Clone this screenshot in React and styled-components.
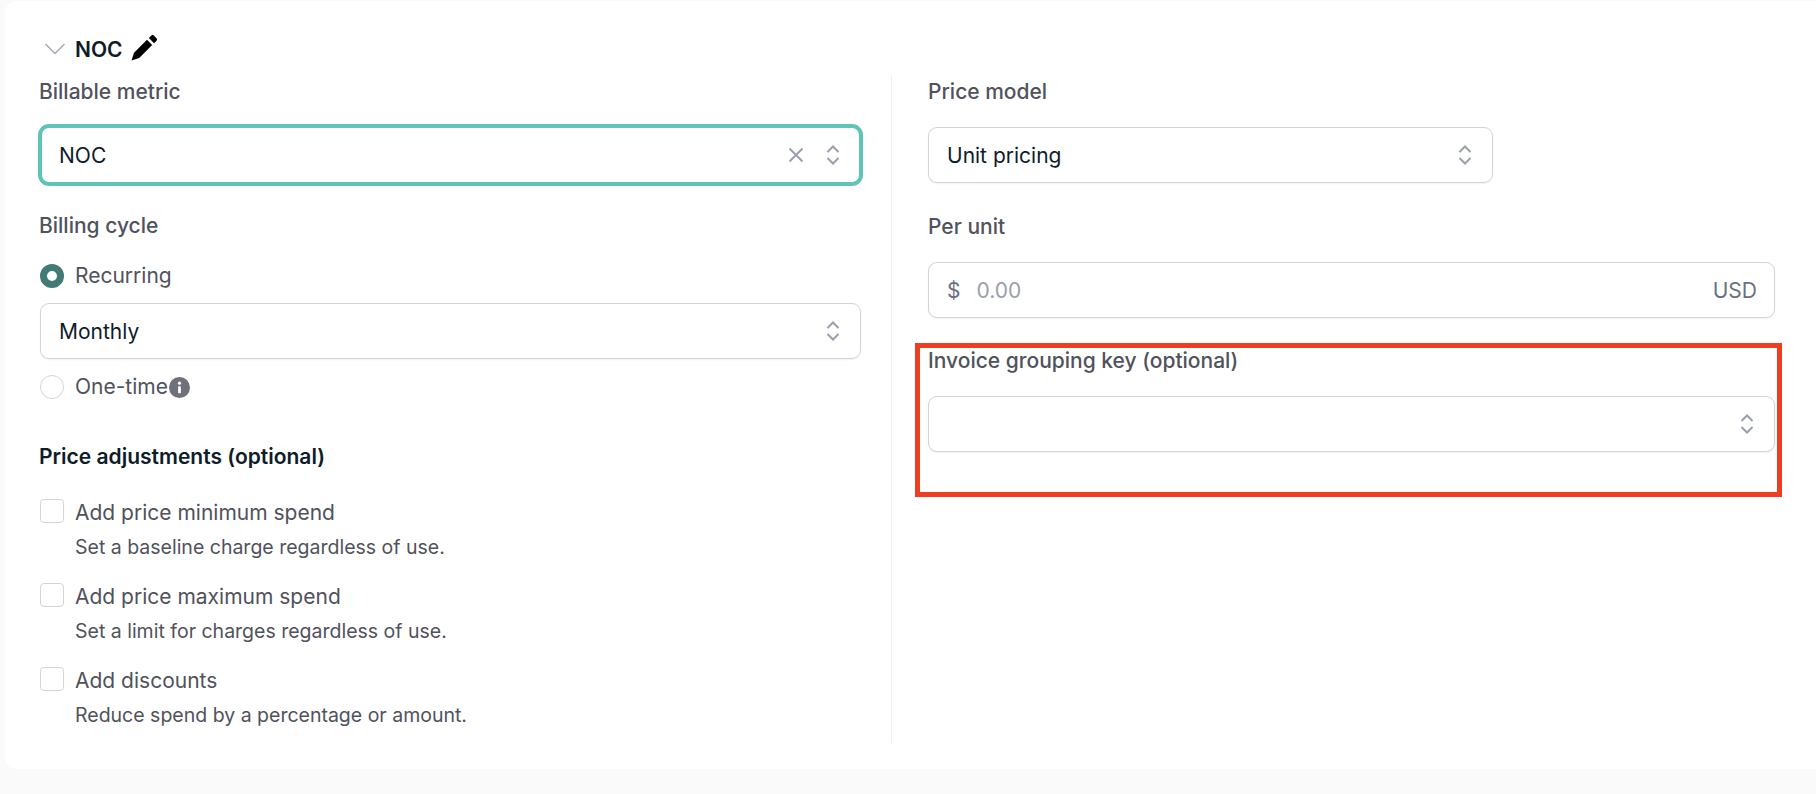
import styled, { createGlobalStyle } from 'styled-components';

const GlobalStyle = createGlobalStyle`
    * {
        box-sizing: border-box;
    }

    body {
        margin: 0;
        background: #fafafa;
        font-family: 'Inter', 'Liberation Sans', sans-serif;
    }
`;

function UpDownIcon() {
    return (
        <svg width="14" height="22" viewBox="0 0 14 22" fill="none" stroke="#9a9fae" strokeWidth="2">
            <path d="M1.5 8 L7 2.5 L12.5 8" />
            <path d="M1.5 14 L7 19.5 L12.5 14" />
        </svg>
    );
}

function CloseIcon() {
    return (
        <svg width="16" height="16" viewBox="0 0 16 16" fill="none" stroke="#9a9fae" strokeWidth="2">
            <path d="M1.5 1.5 L14.5 14.5 M14.5 1.5 L1.5 14.5" />
        </svg>
    );
}

function CollapseIcon() {
    return (
        <svg width="20" height="12" viewBox="0 0 20 12" fill="none" stroke="#a4a8b5" strokeWidth="1.4">
            <path d="M0.5 1 L10 10.5 L19.5 1" />
        </svg>
    );
}

function PencilIcon() {
    return (
        <svg width="27" height="27" viewBox="0 0 26 26" fill="#000">
            <path d="M0.5 25.5 L2.9 18.1 L15.4 5.6 L20.4 10.6 L7.9 23.1 Z" />
            <path d="M17.2 3.8 L19.6 1.4 Q20.8 0.2 22 1.4 L24.6 4 Q25.8 5.2 24.6 6.4 L22.2 8.8 Z" />
        </svg>
    );
}

function InfoIcon() {
    return (
        <svg width="21" height="21" viewBox="0 0 21 21">
            <circle cx="10.5" cy="10.5" r="10.5" fill="#6f7079" />
            <circle cx="10.5" cy="6.2" r="1.6" fill="#fff" />
            <rect x="9.1" y="9.2" width="2.8" height="7" rx="0.6" fill="#fff" />
        </svg>
    );
}

function Adjustment({ title, description }) {
    return (
        <AdjustmentRow>
            <Checkbox />
            <div>
                <OptionLabel>{title}</OptionLabel>
                <Description>{description}</Description>
            </div>
        </AdjustmentRow>
    );
}

export default function App() {
    return (
        <Page>
            <GlobalStyle />
            <Card>
                <Header>
                    <CollapseIcon />
                    <Title>NOC</Title>
                    <PencilIcon />
                </Header>

                <Columns>
                    <LeftColumn>
                        <Label>Billable metric</Label>
                        <Select $focused>
                            <Value>NOC</Value>
                            <CloseIcon />
                            <UpDownIcon />
                        </Select>

                        <SectionLabel>Billing cycle</SectionLabel>
                        <RadioRow>
                            <Radio $checked />
                            <OptionLabel>Recurring</OptionLabel>
                        </RadioRow>
                        <Select>
                            <Value>Monthly</Value>
                            <UpDownIcon />
                        </Select>
                        <RadioRow $last>
                            <Radio />
                            <OptionLabel>One-time</OptionLabel>
                            <InfoIcon />
                        </RadioRow>

                        <Heading>Price adjustments (optional)</Heading>
                        <Adjustment title="Add price minimum spend" description="Set a baseline charge regardless of use." />
                        <Adjustment title="Add price maximum spend" description="Set a limit for charges regardless of use." />
                        <Adjustment title="Add discounts" description="Reduce spend by a percentage or amount." />
                    </LeftColumn>

                    <RightColumn>
                        <Label>Price model</Label>
                        <Select $narrow>
                            <Value>Unit pricing</Value>
                            <UpDownIcon />
                        </Select>

                        <RightLabel>Per unit</RightLabel>
                        <AmountInput>
                            <Affix>$</Affix>
                            <Placeholder>0.00</Placeholder>
                            <Affix>USD</Affix>
                        </AmountInput>

                        <GroupingField>
                            <Highlight />
                            <Label>Invoice grouping key (optional)</Label>
                            <Select>
                                <Value />
                                <UpDownIcon />
                            </Select>
                        </GroupingField>
                    </RightColumn>
                </Columns>
            </Card>
        </Page>
    );
}

const Page = styled.div`
    height: 794px;
    padding: 1px 0 0 5px;
    overflow: hidden;
`;

const Card = styled.div`
    height: 768px;
    padding: 25px 41px 0 35px;
    background: #fff;
    border-radius: 12px 0 0 12px;
`;

const Header = styled.div`
    height: 49px;
    padding: 0 0 2px 5px;
    display: flex;
    align-items: center;
    gap: 10px;

    svg:first-child {
        margin-top: -1px;
    }

    svg:last-child {
        margin: -4px 0 0 -2px;
    }
`;

const Title = styled.h2`
    margin: 0;
    font-size: 21px;
    font-weight: 600;
    color: #0e1c2a;
`;

const Columns = styled.div`
    height: 668px;
    display: grid;
    grid-template-columns: 852px 1fr;
`;

const Label = styled.div`
    height: 28px;
    margin-bottom: 21px;
    font-size: 21px;
    font-weight: 500;
    line-height: 28px;
    color: #50525c;
`;

const SectionLabel = styled(Label)`
    margin: 28px 0 22px;
`;

const RightLabel = styled(Label)`
    margin-top: 30px;
`;

const Heading = styled.h3`
    height: 28px;
    margin: 42px 0 28px;
    font-size: 21px;
    font-weight: 600;
    line-height: 28px;
    color: #0e1c2a;
`;

const LeftColumn = styled.div`
    padding: 3px 30px 0 0;
    border-right: 1px solid #f0f0f2;

    ${Label}, ${Heading} {
        margin-left: -1px;
    }
`;

const RightColumn = styled.div`
    padding: 3px 0 0 36px;
`;

const Select = styled.div`
    width: ${props => props.$narrow ? '565px' : '100%'};
    height: 56px;
    padding: 0 20px 0 18px;
    display: flex;
    align-items: center;
    gap: 22px;
    background: #fff;
    border: 1px solid #d3d4d9;
    border-radius: 9px;
    box-shadow: 0 1px 2px rgba(16, 24, 40, 0.06);

    ${props => props.$focused && `
        width: 825px;
        height: 62px;
        margin: -3px 0 -2px -2px;
        padding: 0 19px 0 17px;
        border: 4px solid #5fc4b8;
        border-radius: 11px;
        box-shadow: none;
    `}
`;

const Value = styled.span`
    flex: 1;
    font-size: 21px;
    color: #0e1c2a;
`;

const RadioRow = styled.div`
    height: 28px;
    margin-top: ${props => props.$last ? '14px' : '0'};
    margin-bottom: ${props => props.$last ? '0' : '13px'};
    display: flex;
    align-items: center;
    gap: 11px;

    svg {
        margin-left: -10px;
    }
`;

const Radio = styled.span`
    width: 24px;
    height: 24px;
    flex: none;
    border-radius: 50%;
    background: #fff;
    border: ${props => props.$checked ? '7px solid #427a76' : '1px solid #d3d4d9'};
`;

const OptionLabel = styled.div`
    height: 28px;
    font-size: 21px;
    line-height: 28px;
    color: #50525c;
`;

const AdjustmentRow = styled.div`
    display: flex;
    gap: 11px;
    margin-bottom: 22px;

    &:last-child {
        margin-bottom: 0;
    }
`;

const Checkbox = styled.span`
    width: 24px;
    height: 24px;
    flex: none;
    background: #fff;
    border: 1px solid #d3d4d9;
    border-radius: 4px;
`;

const Description = styled.div`
    margin-top: 6px;
    font-size: 19.5px;
    line-height: 28px;
    color: #50525c;
`;

const AmountInput = styled.div`
    height: 56px;
    padding: 0 17px 0 18px;
    display: flex;
    align-items: center;
    gap: 16px;
    background: #fff;
    border: 1px solid #d3d4d9;
    border-radius: 9px;
    box-shadow: 0 1px 2px rgba(16, 24, 40, 0.06);
`;

const Affix = styled.span`
    font-size: 21px;
    color: #6a7080;
`;

const Placeholder = styled.span`
    flex: 1;
    font-size: 21px;
    color: #9a9fae;
`;

const GroupingField = styled.div`
    position: relative;
    margin-top: 29px;
`;

// red annotation box drawn over the screenshot
const Highlight = styled.div`
    position: absolute;
    top: -4px;
    left: -13px;
    right: -7px;
    height: 154px;
    border: 5px solid #ee3e22;
    pointer-events: none;
`;
